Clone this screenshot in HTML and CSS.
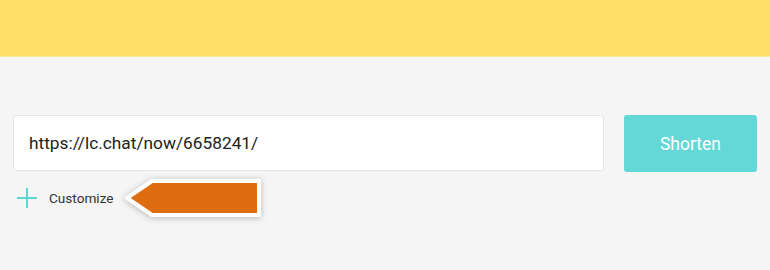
FILE: index.html
```html
<!DOCTYPE html>
<html>
    <head>
        <meta charset="UTF-8">
        <meta name="viewport" content="width=device-width, initial-scale=1">
        <title>Shorten link</title>
        <link rel="stylesheet" href="styles.css">
    </head>
    <body>
        <div class="top-bar"></div>

        <div class="shorten-container">
            <div class="shorten-row">
                <div class="url-field">https://lc.chat/now/6658241/</div>
                <button type="button" class="shorten-button">Shorten</button>
            </div>
            <div class="customize-row">
                <svg class="plus-icon" width="20" height="20" viewBox="0 0 20 20">
                    <path d="M10 0 V20 M0 10 H20" stroke="#5fd4d1" stroke-width="2" fill="none"/>
                </svg>
                <span class="customize-label">Customize</span>
                <!-- seta de destaque -->
                <svg class="hint-arrow" width="146" height="46" viewBox="0 0 146 46">
                    <polygon points="5,23 30,6 137,6 137,40 30,40" fill="#de6c10" stroke="#ffffff" stroke-width="4" stroke-linejoin="round"/>
                </svg>
            </div>
        </div>
    </body>
</html>
```

FILE: styles.css
```css
body {
    margin: 0;
    background: #f5f5f5;
    font-family: Roboto, "Liberation Sans", sans-serif;
    width: 770px;
    height: 270px;
    overflow: hidden;
}
.top-bar {
    height: 56px;
    background: #ffdf67;
    border-bottom: 1px solid #fdeaa0;
}
.shorten-container {
    padding: 58px 13px 0 13px;
}
.shorten-row {
    display: flex;
    gap: 20px;
}
.url-field {
    flex: 1;
    height: 56px;
    box-sizing: border-box;
    background: #ffffff;
    border: 1px solid #e1e4e8;
    border-radius: 3px;
    padding-left: 15px;
    display: flex;
    align-items: center;
    font-size: 17.3px;
    color: #222222;
}
.shorten-button {
    width: 133px;
    height: 57px;
    border: none;
    border-radius: 3px;
    background: #64d8d6;
    color: #ffffff;
    font-family: inherit;
    font-size: 17.5px;
    padding: 0;
}
.customize-row {
    position: relative;
    display: flex;
    align-items: center;
    height: 30px;
    margin-top: 11px;
    padding-left: 4px;
}
.plus-icon {
    display: block;
}
.customize-label {
    margin-left: 12px;
    font-size: 13.6px;
    color: #333333;
}
.hint-arrow {
    position: absolute;
    left: 109px;
    top: -8px;
    filter: drop-shadow(0 1px 3px rgba(0, 0, 0, 0.25));
}
```
